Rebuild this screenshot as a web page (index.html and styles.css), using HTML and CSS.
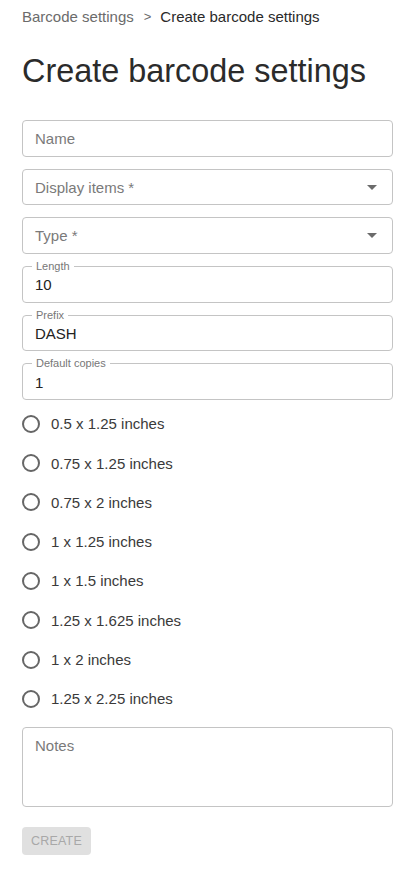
FILE: index.html
```html
<!DOCTYPE html>
<html lang="en">
<head>
<meta charset="utf-8">
<title>Create barcode settings</title>
<link rel="stylesheet" href="styles.css">
</head>
<body>
<div class="page">
  <nav class="crumbs">
    <span class="crumb-link">Barcode settings</span>
    <span class="crumb-sep">&gt;</span>
    <span class="crumb-current">Create barcode settings</span>
  </nav>
  <h1 class="title">Create barcode settings</h1>

  <form class="form">
    <div class="fields">
      <div class="field"><span class="placeholder">Name</span></div>
      <div class="field select"><span class="placeholder">Display items *</span><span class="arrow"></span></div>
      <div class="field select"><span class="placeholder">Type *</span><span class="arrow"></span></div>
      <div class="field"><span class="lbl">Length</span><span class="value">10</span></div>
      <div class="field"><span class="lbl">Prefix</span><span class="value">DASH</span></div>
      <div class="field"><span class="lbl">Default copies</span><span class="value">1</span></div>
    </div>

    <div class="radios">
      <div class="radio"><span class="circle"></span><span>0.5 x 1.25 inches</span></div>
      <div class="radio"><span class="circle"></span><span>0.75 x 1.25 inches</span></div>
      <div class="radio"><span class="circle"></span><span>0.75 x 2 inches</span></div>
      <div class="radio"><span class="circle"></span><span>1 x 1.25 inches</span></div>
      <div class="radio"><span class="circle"></span><span>1 x 1.5 inches</span></div>
      <div class="radio"><span class="circle"></span><span>1.25 x 1.625 inches</span></div>
      <div class="radio"><span class="circle"></span><span>1 x 2 inches</span></div>
      <div class="radio"><span class="circle"></span><span>1.25 x 2.25 inches</span></div>
    </div>

    <div class="notes"><span class="placeholder">Notes</span></div>

    <div class="actions"><span class="btn">CREATE</span></div>
  </form>
</div>
</body>
</html>
```

FILE: styles.css
```css
* { box-sizing: border-box; }
html, body { margin: 0; padding: 0; background: #fff; }
body {
  font-family: "Liberation Sans", Arial, sans-serif;
  color: #222;
}
.page {
  padding: 8px 27px 0 22px;
}
.crumbs {
  font-size: 15px;
  line-height: 18px;
  display: flex;
}
.crumb-link { color: #6b6b6b; }
.crumb-sep { color: #6b6b6b; padding: 0 9px 0 10px; font-size: 13px; }
.crumb-current { color: #2a2a2a; }

.title {
  margin: 26px 0 0 0;
  font-size: 32.4px;
  font-weight: normal;
  line-height: 38px;
  color: #2b2b2b;
}
.form { margin-top: 30px; }
.fields {
  display: flex;
  flex-direction: column;
  gap: 12px;
}
.field {
  position: relative;
  height: 36.7px;
  border: 1px solid #c4c4c4;
  border-radius: 4px;
  display: flex;
  align-items: center;
  padding: 0 12px;
  font-size: 15px;
}
.placeholder { color: #7a7a7a; }
.value { color: #222; margin-top: 1px; }
.lbl {
  position: absolute;
  top: -7px;
  left: 9px;
  padding: 0 4px;
  background: #fff;
  font-size: 11px;
  line-height: 13px;
  color: #777;
}
.select .arrow {
  margin-left: auto;
  margin-right: 3px;
  width: 0;
  height: 0;
  border-left: 5px solid transparent;
  border-right: 5px solid transparent;
  border-top: 5px solid #6b6b6b;
}
.radios {
  display: flex;
  flex-direction: column;
  margin-top: 4px;
}
.radio {
  height: 39.3px;
  display: flex;
  align-items: center;
  gap: 11px;
  font-size: 15px;
  color: #3a3a3a;
}
.circle {
  width: 18px;
  height: 18px;
  border: 2px solid #666;
  border-radius: 50%;
  flex: none;
}
.notes {
  margin-top: 8px;
  height: 80px;
  border: 1px solid #c4c4c4;
  border-radius: 4px;
  padding: 9px 12px;
  font-size: 15px;
  line-height: 18px;
}
.actions { margin-top: 20px; }
.btn {
  display: inline-flex;
  align-items: center;
  justify-content: center;
  width: 69px;
  height: 28px;
  background: #e0e0e0;
  border-radius: 4px;
  color: #a8a8a8;
  font-size: 12.5px;
  letter-spacing: 0.2px;
}
```
